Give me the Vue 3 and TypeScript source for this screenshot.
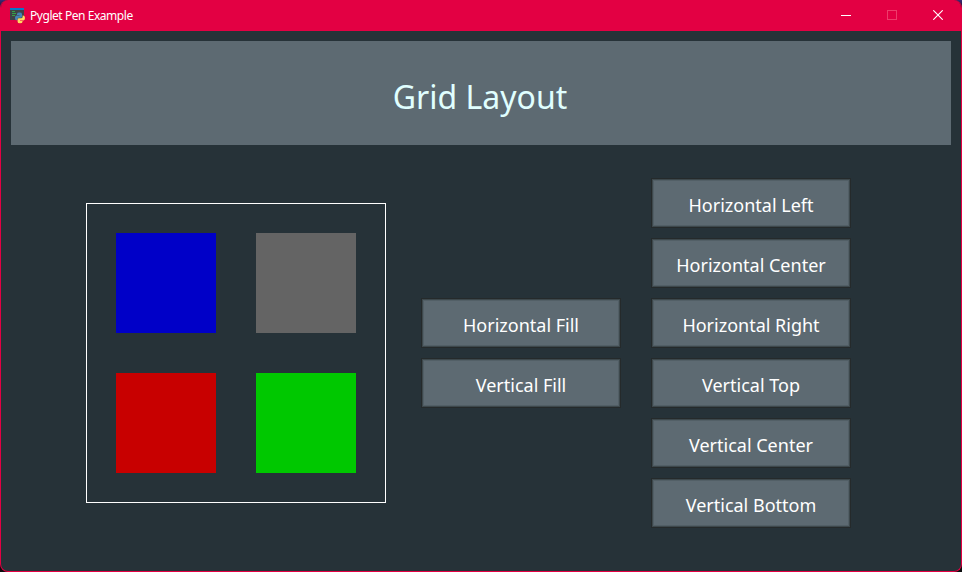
<script setup lang="ts">
interface Cell {
  id: string
  tone: string
}

const title: string = 'Pyglet Pen Example'
const cells: Cell[] = [
  { id: 'top-left', tone: 'blue' },
  { id: 'top-right', tone: 'gray' },
  { id: 'bottom-left', tone: 'red' },
  { id: 'bottom-right', tone: 'green' },
]
const fillActions: string[] = ['Horizontal Fill', 'Vertical Fill']
const alignActions: string[] = [
  'Horizontal Left',
  'Horizontal Center',
  'Horizontal Right',
  'Vertical Top',
  'Vertical Center',
  'Vertical Bottom',
]
</script>

<template>
  <div class="desktop">
    <div class="window">
      <header class="titlebar">
        <svg class="app-icon" width="16" height="16" viewBox="0 0 16 16">
          <rect x="0" y="0" width="14" height="12" fill="#3f4446" />
          <rect x="0" y="0" width="14" height="2" fill="#0878c8" />
          <path d="M2 3.500h3M2 5.500h4M2 7.500h3" stroke="#35a447" stroke-width="1" />
          <path d="M7 7V6Q7 4.600 9.500 4.600T12 6V8.500Q12 9.800 10.800 9.800H8.800Q7.400 9.800 7.400 11.600V12.300H6.500Q5 12.300 5 10T6.600 7.500H9.500V7Z" fill="#4584b6" />
          <path d="M12.600 7.500H13.300Q15 7.500 15 10T13.300 12.400H10V12.900H12.500V13.700Q12.500 15.200 10 15.200T7.600 13.700V11.600Q7.600 10.200 8.900 10.200H11Q12.600 10.200 12.600 8.700Z" fill="#ffd860" />
        </svg>
        <span class="caption">{{ title }}</span>
        <div class="controls">
          <div class="control">
            <svg width="10" height="10" viewBox="0 0 10 10"><path d="M0 5.500h10" stroke="#fff" /></svg>
          </div>
          <div class="control">
            <svg width="10" height="10" viewBox="0 0 10 10"><rect x=".5" y=".5" width="9" height="9" fill="none" stroke="#ee3c6b" /></svg>
          </div>
          <div class="control">
            <svg width="10" height="10" viewBox="0 0 10 10"><path d="M.3 .3l9.400 9.400M9.700 .3l-9.400 9.400" stroke="#fff" stroke-width="1.100" /></svg>
          </div>
        </div>
      </header>
      <main class="client">
        <h1 class="banner">Grid Layout</h1>
        <section class="content">
          <div class="board">
            <div v-for="cell in cells" :key="cell.id" class="cell" :class="cell.tone"></div>
          </div>
          <div class="stack fills">
            <button v-for="label in fillActions" :key="label" class="action" type="button">{{ label }}</button>
          </div>
          <div class="stack aligns">
            <button v-for="label in alignActions" :key="label" class="action" type="button">{{ label }}</button>
          </div>
        </section>
      </main>
    </div>
  </div>
</template>

<style>
body {
  margin: 0;
  overflow: hidden;
}
</style>

<style scoped>
.desktop {
  width: 962px;
  height: 572px;
  background: linear-gradient(to bottom, #3b2a78 0, #0c0c0e 10px);
  font-family: "Noto Sans", sans-serif;
}
.window {
  box-sizing: border-box;
  width: 962px;
  height: 572px;
  display: flex;
  flex-direction: column;
  border: 1px solid #e30043;
  border-top: 0;
  border-radius: 8px;
  overflow: hidden;
  background: #263238;
}
.titlebar {
  height: 31px;
  flex: none;
  display: flex;
  align-items: flex-start;
  background: #e30043;
  color: #fff;
}
.app-icon {
  display: block;
  margin: 8px 0 0 9px;
}
.caption {
  margin: 8px 0 0 4px;
  font-size: 12px;
  line-height: 16px;
  letter-spacing: -0.45px;
  white-space: nowrap;
}
.controls {
  display: flex;
  margin-left: auto;
}
.control {
  width: 46px;
  height: 30px;
  display: flex;
  align-items: center;
  justify-content: center;
}
.control svg {
  display: block;
}
.client {
  flex: 1;
  padding: 10px;
}
.banner {
  box-sizing: border-box;
  margin: 0;
  height: 104px;
  padding-right: 2px;
  line-height: 112px;
  text-align: center;
  background: #5d6a72;
  color: #e0ffff;
  font-size: 32px;
  font-weight: 400;
}
.content {
  display: flex;
  align-items: center;
  height: 416px;
  padding-left: 75px;
}
.board {
  box-sizing: border-box;
  width: 300px;
  height: 300px;
  padding: 29px;
  border: 1px solid #fff;
  display: grid;
  grid-template-columns: 100px 100px;
  grid-template-rows: 100px 100px;
  gap: 40px;
}
.blue {
  background: #0000c8;
}
.gray {
  background: #646464;
}
.red {
  background: #c80000;
}
.green {
  background: #00c800;
}
.stack {
  display: flex;
  flex-direction: column;
  gap: 10px;
}
.fills {
  margin-left: 35px;
}
.aligns {
  margin-left: 30px;
}
.action {
  box-sizing: border-box;
  width: 200px;
  height: 50px;
  margin: 0;
  padding: 4px 0 0;
  border: 1px solid #252a2b;
  background: #5d6a72;
  box-shadow: inset 0 0 0 1px #3d484c, inset 0 0 0 2px #525f66;
  color: #fff;
  font-family: inherit;
  font-size: 18px;
  line-height: 26px;
}
</style>
